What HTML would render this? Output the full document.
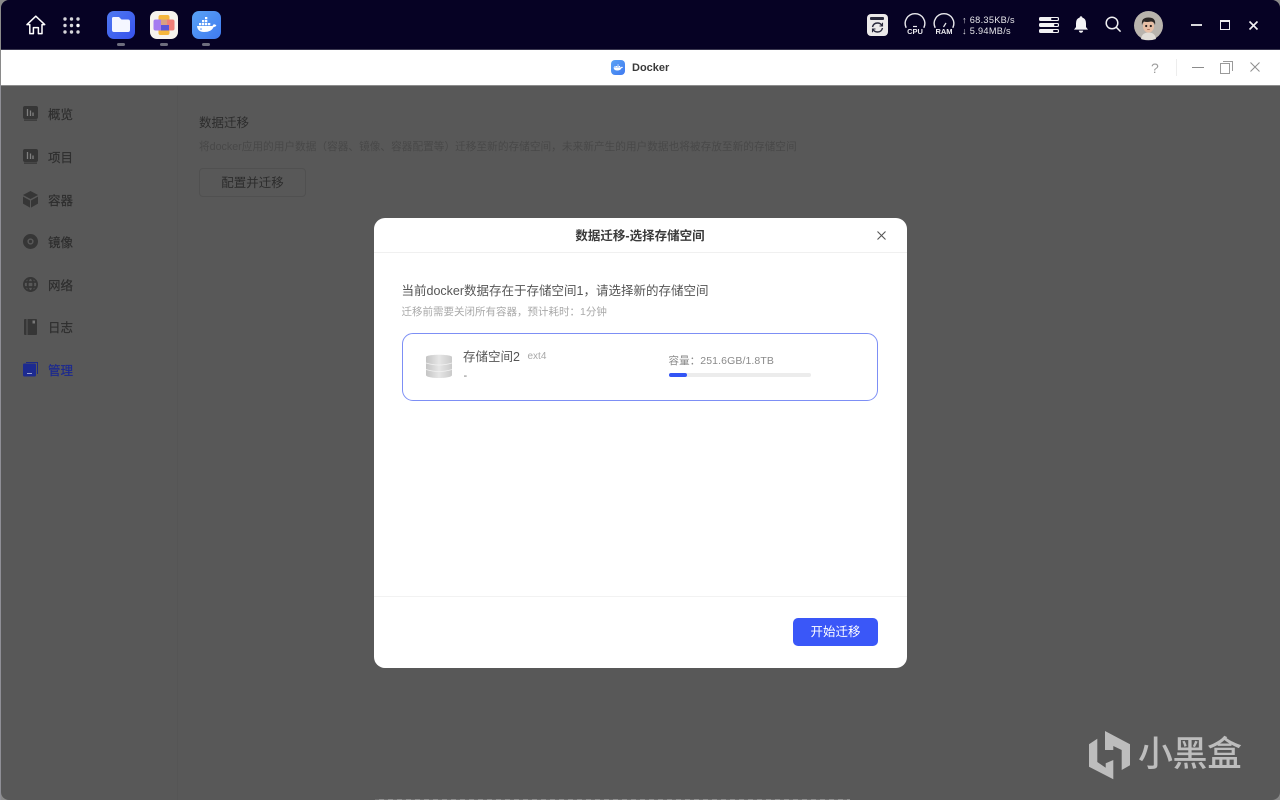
<!DOCTYPE html>
<html lang="zh"><head><meta charset="utf-8"><title>Docker</title>
<style>
html,body{margin:0;padding:0;width:1280px;height:800px;overflow:hidden;background:#8a8a8a}
*{box-sizing:border-box}
body{font-family:"Liberation Sans","Noto Sans CJK SC",sans-serif;position:relative}
.a{position:absolute;white-space:nowrap}
svg{position:absolute;overflow:visible}
.nav{left:48px;font-size:12.5px;line-height:16px;color:#2e2e2e;-webkit-text-stroke:.2px #2e2e2e}
</style></head><body>
<!-- window frame -->
<div class="a" style="left:1px;top:0;width:1279px;height:800px;border-radius:8px 8px 8px 8px;background:#585858;overflow:hidden">
<div class="a" style="left:0;top:0;width:1279px;height:50px;background:#060224;border-bottom:1px solid #3a3850"></div>
<div class="a" style="left:0;top:50px;width:1279px;height:36px;background:#fff;border-bottom:1px solid #8c8c8c"></div>
<div class="a" style="left:176px;top:86px;width:1px;height:714px;background:#555"></div>
</div>
<div class="a" style="left:0;top:85px;width:1px;height:715px;background:#8f8f96"></div>
<div class="a" style="left:375px;top:798.5px;width:475px;height:1.5px;background:repeating-linear-gradient(90deg,#6f6f6f 0 4px,#8f8f8f 4px 9px)"></div>

<!-- home -->
<svg style="left:26px;top:15px" width="20" height="20" viewBox="0 0 20 20" fill="none" stroke="#fff" stroke-width="1.5" stroke-linejoin="round"><path d="M1 9.6 9.8 1.2 18.7 9.6H16V18.6H12.4V12.6H7.4V18.6H3.8V9.6Z"/></svg>
<!-- grid -->
<svg style="left:63px;top:17px" width="18" height="18" fill="#d5d5da"><circle cx="2" cy="2" r="1.7"/><circle cx="8.5" cy="2" r="1.7"/><circle cx="15" cy="2" r="1.7"/><circle cx="2" cy="8.5" r="1.7"/><circle cx="8.5" cy="8.5" r="1.7"/><circle cx="15" cy="8.5" r="1.7" fill="#fff"/><circle cx="2" cy="15" r="1.7"/><circle cx="8.5" cy="15" r="1.7"/><circle cx="15" cy="15" r="1.7"/></svg>

<!-- dock: files -->
<div class="a" style="left:107px;top:11px;width:28px;height:28px;border-radius:7px;background:linear-gradient(135deg,#4f79f0,#3651ee)"></div>
<svg style="left:111px;top:16px" width="20" height="18" fill="#f4f6ff"><path d="M1 2.5Q1 1 2.5 1H8L10.5 3.5H17Q19 3.5 19 5.5V14Q19 16 17 16H3Q1 16 1 14Z"/></svg>
<div class="a" style="left:117px;top:43px;width:8px;height:2.5px;border-radius:2px;background:#6d6d7d"></div>
<!-- dock: app -->
<div class="a" style="left:150px;top:11px;width:28px;height:28px;border-radius:7px;background:#f6f3ee"></div>
<svg style="left:153px;top:15px" width="22" height="20"><rect x="5.5" y="0" width="11" height="20" rx="2" fill="#f5b63c"/><rect x="0.5" y="4.5" width="11" height="11" rx="2" fill="#a57cf0"/><rect x="10" y="4.5" width="11.5" height="11" rx="2" fill="#ef7f78"/><rect x="8" y="4.5" width="6" height="5.5" fill="#d8a083"/><rect x="8" y="10" width="8" height="5.5" fill="#5a55d8"/></svg>
<div class="a" style="left:160px;top:43px;width:8px;height:2.5px;border-radius:2px;background:#6d6d7d"></div>
<!-- dock: docker -->
<div class="a" style="left:192px;top:11px;width:29px;height:28px;border-radius:7px;background:linear-gradient(135deg,#5aa2f5,#3f7af0)"></div>
<svg style="left:196px;top:17px" width="21" height="16" fill="#fff"><path d="M1 9H16.5Q17 7.4 18 7.3 19.6 7.4 20.4 8.4 19.4 10 17.6 10 15.6 15 8 15 1.6 15 1 9Z"/><path d="M3 6h2.3v2.3H3zM6 6h2.3v2.3H6zM9 6h2.3v2.3H9zM12 6h2.3v2.3H12zM6 3h2.3v2.3H6zM9 3h2.3v2.3H9zM9 0h2.3v2.3H9z"/><circle cx="5" cy="12" r=".8" fill="#4f8cf2"/></svg>
<div class="a" style="left:202px;top:43px;width:8px;height:2.5px;border-radius:2px;background:#6d6d7d"></div>

<!-- sync icon -->
<div class="a" style="left:867px;top:14px;width:21px;height:22px;border-radius:4px;background:#eceaea"></div>
<div class="a" style="left:870px;top:17px;width:14px;height:3px;background:#2a2a3c;border-radius:1px"></div>
<svg style="left:871px;top:22px" width="13" height="11" fill="none" stroke="#2a2a3c" stroke-width="1.4"><path d="M1.5 5Q2.5 1 6.5 1 9.5 1 11 3.5M11.5 6Q10.5 10 6.5 10 3.5 10 2 7.5"/><path d="M11.5 .8V4H8.5M1.5 10.2V7H4.5" stroke-width="1.1"/></svg>
<!-- gauges -->
<svg style="left:904px;top:15px" width="22" height="14" fill="none" stroke="#e8e8ec" stroke-width="1.4"><path d="M2.2 12.8A9.8 9.8 0 1 1 19.8 12.8"/><path d="M9 11.5H13" stroke-width="1.2"/></svg>
<div class="a" style="left:904px;top:26.5px;width:22px;text-align:center;font-size:7.5px;line-height:9px;font-weight:bold;color:#ecebef">CPU</div>
<svg style="left:933px;top:15px" width="22" height="14" fill="none" stroke="#e8e8ec" stroke-width="1.4"><path d="M2.2 12.8A9.8 9.8 0 1 1 19.8 12.8"/><path d="M10.5 12 13 8" stroke-width="1.2"/></svg>
<div class="a" style="left:933px;top:26.5px;width:22px;text-align:center;font-size:7.5px;line-height:9px;font-weight:bold;color:#ecebef">RAM</div>
<div class="a" style="left:962px;top:14.5px;font-size:9.2px;line-height:11px;letter-spacing:.3px;color:#e6e6ea">↑ 68.35KB/s</div>
<div class="a" style="left:962px;top:25.5px;font-size:9.2px;line-height:11px;letter-spacing:.3px;color:#e6e6ea">↓ 5.94MB/s</div>
<!-- storage -->
<svg style="left:1039px;top:17px" width="20" height="16"><g fill="#f2f2f4"><rect x="0" y="0" width="20" height="4" rx="1.5"/><rect x="0" y="6" width="20" height="4" rx="1.5"/><rect x="0" y="12" width="20" height="4" rx="1.5"/></g><g fill="#060224"><rect x="12" y="1" width="7" height="2" rx="1"/><rect x="15" y="7" width="4" height="2" rx="1"/><rect x="14" y="13" width="5" height="2" rx="1"/></g></svg>
<!-- bell -->
<svg style="left:1073px;top:15px" width="16" height="19" fill="#f4f4f6"><path d="M8 1.2Q9.2 1.2 9.4 2.6 13 3.6 13 8.2V12L15 14.6H1L3 12V8.2Q3 3.6 6.6 2.6 6.8 1.2 8 1.2Z"/><path d="M5.8 15.6H10.2Q9.8 17.8 8 17.8 6.2 17.8 5.8 15.6Z"/></svg>
<!-- search -->
<svg style="left:1105px;top:16px" width="17" height="17" fill="none" stroke="#f0f0f2" stroke-width="1.5"><circle cx="7" cy="7" r="5.8"/><path d="M11.2 11.2 15.6 15.6"/></svg>
<!-- avatar -->
<svg style="left:1134px;top:11px" width="29" height="29"><circle cx="14.5" cy="14.5" r="14.5" fill="#b9b4ad"/><path d="M7 28Q8 21.5 14.5 21.5 21 21.5 22 28 14.5 30.5 7 28Z" fill="#e2ded8"/><ellipse cx="14.5" cy="15" rx="5.6" ry="6.6" fill="#e8bfa5"/><path d="M8 14Q6.8 6.5 14.5 6.5 22.2 6.5 21 14 20 10.5 17 10.5 12.5 11.5 10 10.5 8.7 11.5 8 14Z" fill="#2c2725"/><circle cx="12.2" cy="15" r="1.1" fill="#26201d"/><circle cx="16.8" cy="15" r="1.1" fill="#26201d"/><path d="M13.2 18.5H15.8" stroke="#a0624f" stroke-width=".8"/></svg>
<!-- window buttons top -->
<div class="a" style="left:1191px;top:24px;width:11px;height:1.5px;background:#d8d8dc"></div>
<div class="a" style="left:1220px;top:20px;width:10px;height:10px;border:1.5px solid #eee;border-top-width:2px"></div>
<svg style="left:1249px;top:21px" width="9" height="9" fill="none" stroke="#f2f2f4" stroke-width="1.6"><path d="M.5.5 8.5 8.5M8.5.5.5 8.5"/></svg>

<!-- title bar -->
<div class="a" style="left:611px;top:60px;width:14px;height:14.5px;border-radius:4px;background:linear-gradient(135deg,#5aa2f5,#3f7af0)"></div>
<svg style="left:613px;top:63px" width="10" height="8" fill="#fff"><path d="M.5 4.4H8Q8.3 3.7 9 3.7 9.6 3.8 10 4.2 9.5 5 8.6 5 7.7 7.5 4 7.5.8 7.5.5 4.4Z"/><path d="M1.5 3h1.1v1.1H1.5zM3 3h1.1v1.1H3zM4.5 3h1.1v1.1H4.5zM6 3h1.1v1.1H6zM4.5 1.5h1.1v1.1H4.5z"/></svg>
<div class="a" style="left:632px;top:60.5px;font-size:11px;line-height:15px;font-weight:bold;color:#3a3a3a">Docker</div>
<div class="a" style="left:1151px;top:60px;font-size:14px;line-height:17px;color:#9d9d9d">?</div>
<div class="a" style="left:1176px;top:59px;width:1px;height:17px;background:#ededed"></div>
<div class="a" style="left:1192px;top:67px;width:12px;height:1px;background:#8b8b8b"></div>
<svg style="left:1220px;top:61px" width="13" height="13" fill="none" stroke="#9a9a9a"><rect x=".5" y="2.5" width="9" height="10"/><path d="M3 .5H12.5V10"/></svg>
<svg style="left:1250px;top:62px" width="10" height="10" fill="none" stroke="#8e8e8e"><path d="M.5.5 9.5 9.5M9.5.5.5 9.5"/></svg>

<!-- sidebar icons -->
<svg style="left:23px;top:106px" width="15" height="15"><rect x="0" y="0" width="15" height="13" rx="2" fill="#363636"/><rect x="1" y="13.5" width="13" height="1.2" fill="#333"/><path d="M4.5 3V10M7.5 4.5V10M10 6.5V10" stroke="#808080" stroke-width="1.3"/></svg>
<svg style="left:23px;top:149px" width="15" height="15"><rect x="0" y="0" width="15" height="13" rx="2" fill="#363636"/><rect x="1" y="13.5" width="13" height="1.2" fill="#333"/><path d="M4.5 3V10M7.5 4.5V10M10 6.5V10" stroke="#808080" stroke-width="1.3"/></svg>
<svg style="left:23px;top:191px" width="15" height="17" fill="#363636"><path d="M7.5 0 15 4 7.5 8 0 4Z"/><path d="M0 5.6 7 9.5V16.6L0 12.6Z"/><path d="M15 5.6 8 9.5V16.6L15 12.6Z"/></svg>
<svg style="left:23px;top:234px" width="15" height="15"><circle cx="7.5" cy="7.5" r="5.3" fill="none" stroke="#363636" stroke-width="4.4"/><circle cx="7.5" cy="7.5" r="1.6" fill="#363636"/></svg>
<svg style="left:23px;top:277px" width="15" height="15" fill="none" stroke="#363636" stroke-width="1.8"><circle cx="7.5" cy="7.5" r="6.6"/><ellipse cx="7.5" cy="7.5" rx="2.8" ry="6.6"/><path d="M1 5H14M1 10H14"/></svg>
<svg style="left:24px;top:319px" width="13" height="16"><rect width="13" height="16" rx="1" fill="#363636"/><rect x="2.5" y="0" width="1" height="16" fill="#5a5a5a"/><rect x="8.5" y="1.5" width="2.5" height="3" fill="#777"/></svg>
<svg style="left:23px;top:362px" width="15" height="15"><path d="M3 0H15V12H14V1H3Z" fill="#1c2a86"/><rect x="0" y="1.5" width="13" height="13" rx="1.2" fill="#1c2a90"/><rect x="4" y="11" width="5" height="1" fill="#9aa2d0"/></svg>
<div class="a nav" style="top:107px">概览</div>
<div class="a nav" style="top:150px">项目</div>
<div class="a nav" style="top:192.5px">容器</div>
<div class="a nav" style="top:235px">镜像</div>
<div class="a nav" style="top:277.5px">网络</div>
<div class="a nav" style="top:320px">日志</div>
<div class="a nav" style="top:363px;color:#1d2a8e;-webkit-text-stroke:.25px #1d2a8e">管理</div>

<!-- content behind -->
<div class="a" style="left:199px;top:114.5px;font-size:12.5px;line-height:17px;color:#2c2c2c">数据迁移</div>
<div class="a" style="left:199px;top:139px;font-size:10.68px;line-height:16px;color:#484848">将docker应用的用户数据（容器、镜像、容器配置等）迁移至新的存储空间，未来新产生的用户数据也将被存放至新的存储空间</div>
<div class="a" style="left:199px;top:168px;width:107px;height:29px;border:1px solid #505050;border-radius:4px;text-align:center;font-size:12.5px;line-height:28px;color:#2c2c2c">配置并迁移</div>

<!-- dialog -->
<div class="a" style="left:373.5px;top:218px;width:533px;height:450px;background:#fff;border-radius:11px;overflow:hidden">
  <div class="a" style="left:0;top:34px;width:533px;height:1px;background:#f0f0f0"></div>
  <div class="a" style="left:0;top:378px;width:533px;height:1px;background:#f2f2f2"></div>
  <div class="a" style="left:0;top:10px;width:533px;text-align:center;font-size:12.5px;line-height:17px;font-weight:bold;color:#3a3a3a">数据迁移-选择存储空间</div>
  <svg style="left:503px;top:13px" width="9" height="9" fill="none" stroke="#555" stroke-width="1.1"><path d="M.5.5 8.5 8.5M8.5.5.5 8.5"/></svg>
  <div class="a" style="left:28px;top:63.5px;font-size:12.5px;line-height:18px;color:#555">当前docker数据存在于存储空间1，请选择新的存储空间</div>
  <div class="a" style="left:28px;top:87px;font-size:10.5px;line-height:15px;color:#a9a9a9">迁移前需要关闭所有容器，预计耗时：1分钟</div>
  <div class="a" style="left:28.5px;top:115px;width:476px;height:68px;border:1px solid #7d8ff5;border-radius:11px"></div>
  <svg style="left:52px;top:136px" width="26" height="25"><defs><linearGradient id="g" x1="0" x2="1"><stop offset="0" stop-color="#c4c4c4"/><stop offset=".5" stop-color="#e6e6e6"/><stop offset="1" stop-color="#cacaca"/></linearGradient></defs><path d="M0 3C0 0 26 0 26 3V21C26 25 0 25 0 21Z" fill="url(#g)"/><path d="M0 9Q13 13 26 9M0 15.5Q13 19.5 26 15.5" fill="none" stroke="#f2f2f2" stroke-width=".8"/></svg>
  <div class="a" style="left:89.5px;top:129.5px;font-size:12.5px;line-height:18px;color:#555">存储空间2</div>
  <div class="a" style="left:154px;top:132px;font-size:10px;line-height:14px;color:#a8a8a8">ext4</div>
  <div class="a" style="left:90px;top:151px;font-size:11px;line-height:15px;color:#777">-</div>
  <div class="a" style="left:295px;top:136px;font-size:10.5px;line-height:15px;letter-spacing:.1px;color:#8a8a8a">容量：251.6GB/1.8TB</div>
  <div class="a" style="left:295px;top:155px;width:142px;height:3.5px;background:#ececec;border-radius:2px"></div>
  <div class="a" style="left:295px;top:155px;width:18px;height:3.5px;background:#3355f5;border-radius:2px"></div>
  <div class="a" style="left:419.5px;top:400px;width:85px;height:28px;background:#3a57f8;border-radius:5px;text-align:center;font-size:12.5px;line-height:29px;color:#fff">开始迁移</div>
</div>

<!-- watermark -->
<svg style="left:1085px;top:726px" width="50" height="58" fill="#bdbdbd"><path d="M12.3 12.7 4 18.3V40.7L28.3 53.3V34L20.7 37.3V41.7L12.3 36Z"/><path d="M20 5 45 18.3V39.3L36.7 44V24L28.3 20V24H20Z"/></svg>
<div class="a" style="left:1138px;top:732px;font-size:35px;line-height:46px;letter-spacing:-.5px;color:#bdbdbd;font-weight:500">小黑盒</div>
</body></html>
